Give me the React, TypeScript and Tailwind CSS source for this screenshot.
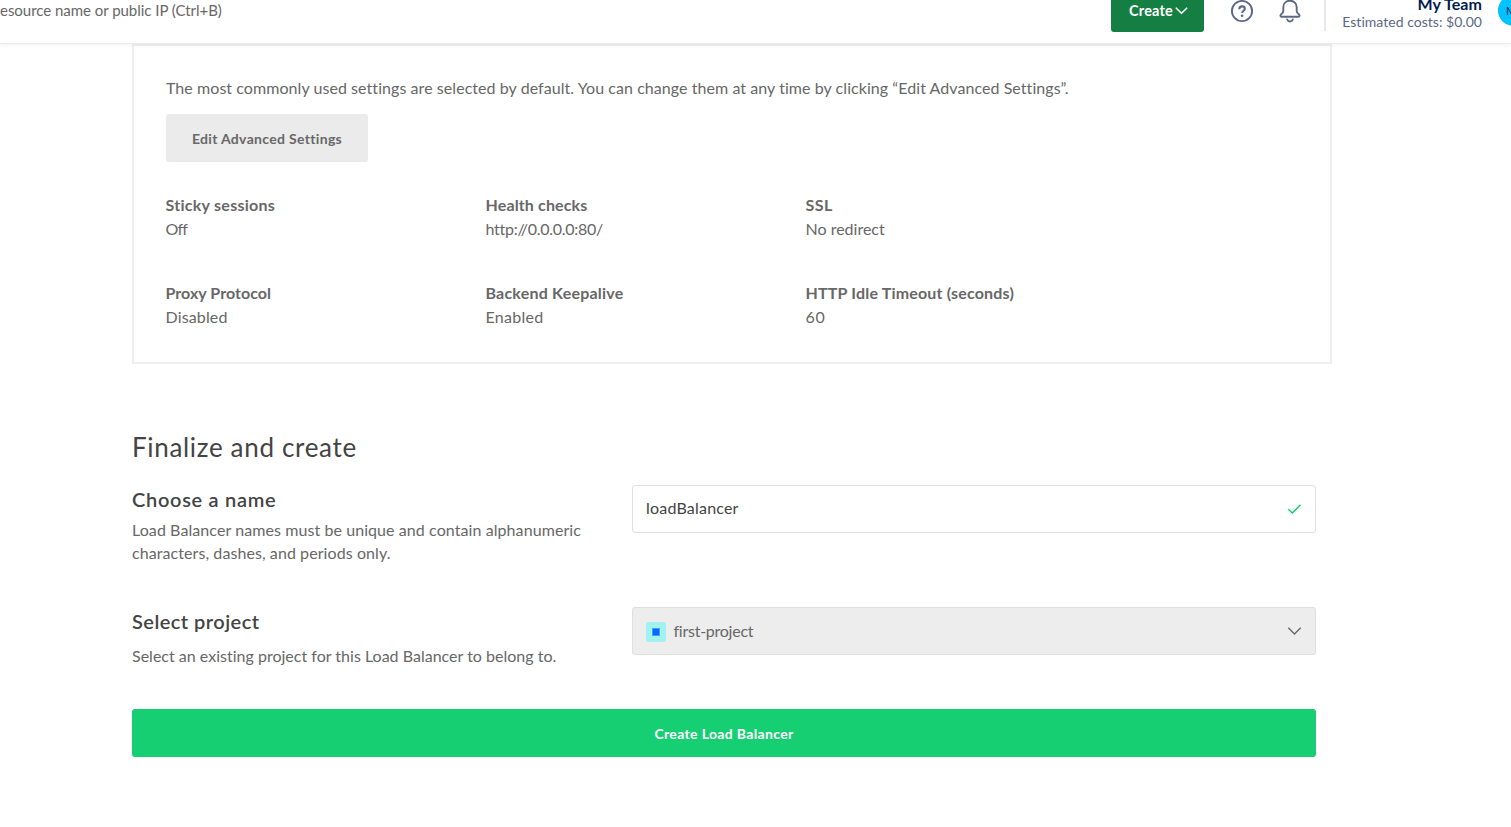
import type { ReactNode } from 'react';

const settings = [
  { label: 'Sticky sessions', value: 'Off', l: 'tracking-[0.27px]', v: 'tracking-[-0.8px]' },
  { label: 'Health checks', value: 'http://0.0.0.0:80/', l: 'tracking-[0.14px]', v: 'tracking-[-0.27px]' },
  { label: 'SSL', value: 'No redirect', l: 'tracking-[0.5px]', v: '' },
  { label: 'Proxy Protocol', value: 'Disabled', l: 'tracking-[0.04px]', v: 'tracking-[0.14px]' },
  { label: 'Backend Keepalive', value: 'Enabled', l: 'tracking-[0.21px]', v: 'tracking-[0.28px]' },
  { label: 'HTTP Idle Timeout (seconds)', value: '60', l: 'tracking-[0.18px]', v: 'tracking-[0.7px]' },
];

function Header() {
  return (
    <header className="relative z-10 flex h-11 justify-between overflow-hidden border-b border-[#ebebeb] bg-white shadow-[0_2px_4px_rgba(0,0,0,0.04)]">
      <div className="h-5 text-[15px] leading-5 tracking-[-0.03px] whitespace-nowrap">esource name or public IP (Ctrl+B)</div>
      <div className="flex h-8 shrink-0 items-start">
        <button className="flex h-8 w-[93px] items-start gap-[2px] rounded-b-[3px] bg-[#157f43] pl-[18px] text-[14.5px] leading-[21px] font-bold tracking-[0.2px] text-white">
          Create
          <svg className="mt-[6px]" width="13" height="10" viewBox="0 0 13 10" fill="none" stroke="currentColor" strokeWidth="1.6" strokeLinecap="round" strokeLinejoin="round">
            <path d="M1.3 2.2 6.5 7.3l5.2-5.1" />
          </svg>
        </button>
        <svg className="ml-[26px] shrink-0" width="24" height="24" viewBox="0 0 24 24" fill="none" stroke="#5b6987" strokeWidth="1.9">
          <circle cx="12" cy="11" r="10.1" />
          <path d="M9.3 9.2c0-1.8 1.2-2.8 2.8-2.8s2.7 1 2.7 2.4c0 1.9-2.6 2.1-2.6 4.1" strokeWidth="2.1" />
          <circle cx="12.1" cy="15.7" r="1.3" fill="#5b6987" stroke="none" />
        </svg>
        <svg className="ml-6 shrink-0" width="24" height="24" viewBox="0 0 24 24" fill="none" stroke="#5b6987" strokeWidth="1.9" strokeLinejoin="round" strokeLinecap="round">
          <path d="M12 .7C8 .7 5.3 3.5 5.3 7.2v3.9c0 1.5-.8 2.3-2.1 3.2-1.2.8-.9 2.4.4 2.4h16.8c1.3 0 1.6-1.6.4-2.4-1.3-.9-2.1-1.7-2.1-3.2V7.2C18.7 3.5 16 .7 12 .7Z" />
          <path d="M9.2 19.5c.5 1.3 1.5 2 2.8 2s2.300-.7 2.800-2" />
        </svg>
        <div className="ml-[22px] h-[31px] w-[2px] bg-[#e9e9ec]" />
        <div className="-mt-[5px] ml-4 flex w-[140px] flex-col items-end whitespace-nowrap">
          <div className="h-[18px] text-base leading-[18px] font-bold tracking-[0.05px] text-[#031b4e]">My Team</div>
          <div className="h-[18px] text-sm leading-[18px] tracking-[0.03px] text-[#5b6987]">Estimated costs: $0.00</div>
        </div>
        <div className="-mt-[5px] ml-4 h-[31px] w-[13px] overflow-hidden">
          <div className="h-[31px] w-[31px] rounded-full bg-[#00c2ff] pl-[8px] text-[11px] leading-[31px] text-[#031b4e]">M</div>
        </div>
      </div>
    </header>
  );
}

function Row({ children, className }: { children: ReactNode; className: string }) {
  return <div className={`flex w-[1184px] ${className}`}>{children}</div>;
}

export default function App() {
  return (
    <div className="h-[827px] w-full overflow-hidden bg-white font-[Lato,sans-serif] text-base text-[#676767] [font-variant-ligatures:none]">
      <Header />
      <main className="ml-[132px] w-[1200px]">
        <section className="h-[320px] border-2 border-[#efefef] px-8 pt-[30px]">
          <p className="leading-6 tracking-[0.06px] whitespace-nowrap">
            The most commonly used settings are selected by default. You can change them at any time by clicking “Edit Advanced Settings”.
          </p>
          <button className="mt-[14px] h-12 w-[202px] rounded-[3px] bg-[#ebebeb] pt-px text-[14px] font-bold tracking-[0.32px]">Edit Advanced Settings</button>
          <dl className="mt-[31px] -ml-[0.5px] grid grid-cols-[320px_320px_320px] gap-y-10">
            {settings.map((s) => (
              <div key={s.label} className="leading-6 whitespace-nowrap">
                <dt className={`font-bold ${s.l}`}>{s.label}</dt>
                <dd className={s.v}>{s.value}</dd>
              </div>
            ))}
          </dl>
        </section>

        <h2 className="mt-[66px] h-[35px] text-[26px] leading-[34px] tracking-[0.67px] text-[#444]">Finalize and create</h2>

        <Row className="mt-5 h-[122px]">
          <div className="w-[500px] shrink-0">
            <h3 className="h-[33px] pt-[2px] text-[20px] leading-6 font-semibold tracking-[0.7px] text-[#444]">Choose a name</h3>
            <p className="leading-[23px] tracking-[0.08px]">
              Load Balancer names must be unique and contain alphanumeric
              <br />
              characters, dashes, and periods only.
            </p>
          </div>
          <div className="flex h-12 flex-1 items-center justify-between rounded-[3px] border border-[#dfdfdf] px-[13px] text-[#444]">
            <span className="-mt-[2px] tracking-[0.2px]">loadBalancer</span>
            <svg width="15" height="12" viewBox="0 0 15 12" fill="none" stroke="#15cd72" strokeWidth="1.5">
              <path d="M1.3 6.3 5.3 10 13.5 1.8" />
            </svg>
          </div>
        </Row>

        <Row className="h-[102px]">
          <div className="w-[500px] shrink-0">
            <h3 className="h-[37px] pt-[2px] text-[20px] leading-6 font-semibold tracking-[0.46px] text-[#444]">Select project</h3>
            <p className="leading-6 tracking-[0.01px]">Select an existing project for this Load Balancer to belong to.</p>
          </div>
          <div className="flex h-12 flex-1 items-center rounded-[3px] border border-[#dfdfdf] bg-[#ededed] px-[13px]">
            <span className="mt-[2px] flex size-5 items-center justify-center rounded-[2px] bg-[#a0f3ef]">
              <span className="size-2 bg-[#0069ff] outline-1 -outline-offset-1 outline-[#4b9bfa]" />
            </span>
            <span className="ml-[7.5px] flex-1 tracking-[-0.25px]">first-project</span>
            <svg width="15" height="10" viewBox="0 0 15 10" fill="none" stroke="#676767" strokeWidth="1.4">
              <path d="M1.3 1.8 7.5 8l6.2-6.2" />
            </svg>
          </div>
        </Row>

        <button className="h-12 w-[1184px] rounded-[3px] bg-[#17cf73] pt-px text-[14px] font-bold tracking-[0.35px] text-white">Create Load Balancer</button>
      </main>
    </div>
  );
}
